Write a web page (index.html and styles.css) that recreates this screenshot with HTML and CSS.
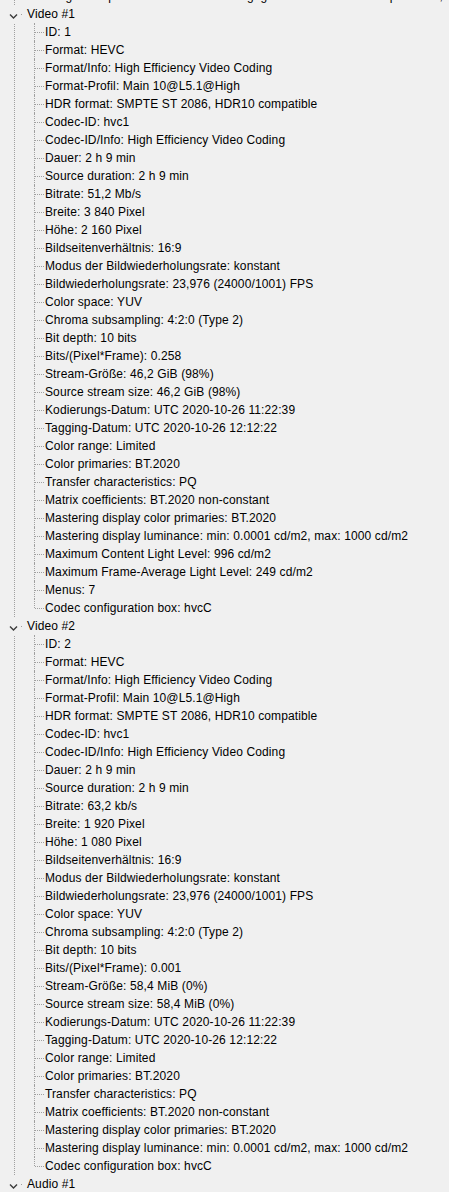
FILE: index.html
```html
<!DOCTYPE html>
<html lang="de">
  <head>
    <meta charset="UTF-8" />
    <meta name="viewport" content="width=device-width, initial-scale=1.0" />
    <title>MediaInfo - Baumansicht</title>
    <link rel="stylesheet" href="styles.css">
  </head>
  <body>
    <ul class="tree">
      <li class="group">
        <ul class="children">
          <li class="leaf last">Long description: Die letzte Schlacht gegen die Maschinen kämpfen Neo, T</li>
        </ul>
      </li>
      <li class="group">
        <div class="row">
          <svg class="chevron" width="20" height="18" viewBox="0 0 20 18"><polyline points="10,9.5 13.5,13 17,9.5" /></svg>
          <span class="dot"></span>
          <span class="label">Video #1</span>
        </div>
        <ul class="children">
          <li class="leaf">ID: 1</li>
          <li class="leaf">Format: HEVC</li>
          <li class="leaf">Format/Info: High Efficiency Video Coding</li>
          <li class="leaf">Format-Profil: Main 10@L5.1@High</li>
          <li class="leaf">HDR format: SMPTE ST 2086, HDR10 compatible</li>
          <li class="leaf">Codec-ID: hvc1</li>
          <li class="leaf">Codec-ID/Info: High Efficiency Video Coding</li>
          <li class="leaf">Dauer: 2 h 9 min</li>
          <li class="leaf">Source duration: 2 h 9 min</li>
          <li class="leaf">Bitrate: 51,2 Mb/s</li>
          <li class="leaf">Breite: 3 840 Pixel</li>
          <li class="leaf">Höhe: 2 160 Pixel</li>
          <li class="leaf">Bildseitenverhältnis: 16:9</li>
          <li class="leaf">Modus der Bildwiederholungsrate: konstant</li>
          <li class="leaf">Bildwiederholungsrate: 23,976 (24000/1001) FPS</li>
          <li class="leaf">Color space: YUV</li>
          <li class="leaf">Chroma subsampling: 4:2:0 (Type 2)</li>
          <li class="leaf">Bit depth: 10 bits</li>
          <li class="leaf">Bits/(Pixel*Frame): 0.258</li>
          <li class="leaf">Stream-Größe: 46,2 GiB (98%)</li>
          <li class="leaf">Source stream size: 46,2 GiB (98%)</li>
          <li class="leaf">Kodierungs-Datum: UTC 2020-10-26 11:22:39</li>
          <li class="leaf">Tagging-Datum: UTC 2020-10-26 12:12:22</li>
          <li class="leaf">Color range: Limited</li>
          <li class="leaf">Color primaries: BT.2020</li>
          <li class="leaf">Transfer characteristics: PQ</li>
          <li class="leaf">Matrix coefficients: BT.2020 non-constant</li>
          <li class="leaf">Mastering display color primaries: BT.2020</li>
          <li class="leaf">Mastering display luminance: min: 0.0001 cd/m2, max: 1000 cd/m2</li>
          <li class="leaf">Maximum Content Light Level: 996 cd/m2</li>
          <li class="leaf">Maximum Frame-Average Light Level: 249 cd/m2</li>
          <li class="leaf">Menus: 7</li>
          <li class="leaf last">Codec configuration box: hvcC</li>
        </ul>
      </li>
      <li class="group">
        <div class="row">
          <svg class="chevron" width="20" height="18" viewBox="0 0 20 18"><polyline points="10,9.5 13.5,13 17,9.5" /></svg>
          <span class="dot"></span>
          <span class="label">Video #2</span>
        </div>
        <ul class="children">
          <li class="leaf">ID: 2</li>
          <li class="leaf">Format: HEVC</li>
          <li class="leaf">Format/Info: High Efficiency Video Coding</li>
          <li class="leaf">Format-Profil: Main 10@L5.1@High</li>
          <li class="leaf">HDR format: SMPTE ST 2086, HDR10 compatible</li>
          <li class="leaf">Codec-ID: hvc1</li>
          <li class="leaf">Codec-ID/Info: High Efficiency Video Coding</li>
          <li class="leaf">Dauer: 2 h 9 min</li>
          <li class="leaf">Source duration: 2 h 9 min</li>
          <li class="leaf">Bitrate: 63,2 kb/s</li>
          <li class="leaf">Breite: 1 920 Pixel</li>
          <li class="leaf">Höhe: 1 080 Pixel</li>
          <li class="leaf">Bildseitenverhältnis: 16:9</li>
          <li class="leaf">Modus der Bildwiederholungsrate: konstant</li>
          <li class="leaf">Bildwiederholungsrate: 23,976 (24000/1001) FPS</li>
          <li class="leaf">Color space: YUV</li>
          <li class="leaf">Chroma subsampling: 4:2:0 (Type 2)</li>
          <li class="leaf">Bit depth: 10 bits</li>
          <li class="leaf">Bits/(Pixel*Frame): 0.001</li>
          <li class="leaf">Stream-Größe: 58,4 MiB (0%)</li>
          <li class="leaf">Source stream size: 58,4 MiB (0%)</li>
          <li class="leaf">Kodierungs-Datum: UTC 2020-10-26 11:22:39</li>
          <li class="leaf">Tagging-Datum: UTC 2020-10-26 12:12:22</li>
          <li class="leaf">Color range: Limited</li>
          <li class="leaf">Color primaries: BT.2020</li>
          <li class="leaf">Transfer characteristics: PQ</li>
          <li class="leaf">Matrix coefficients: BT.2020 non-constant</li>
          <li class="leaf">Mastering display color primaries: BT.2020</li>
          <li class="leaf">Mastering display luminance: min: 0.0001 cd/m2, max: 1000 cd/m2</li>
          <li class="leaf last">Codec configuration box: hvcC</li>
        </ul>
      </li>
      <li class="group">
        <div class="row">
          <svg class="chevron" width="20" height="18" viewBox="0 0 20 18"><polyline points="10,9.5 13.5,13 17,9.5" /></svg>
          <span class="dot"></span>
          <span class="label">Audio #1</span>
        </div>
      </li>
    </ul>
  </body>
</html>
```

FILE: styles.css
```css
html {
  overflow: hidden;
}
body {
  font-family: "Liberation Sans", Arial, sans-serif;
  font-size: 12px;
  letter-spacing: 0.12px;
  color: #000;
  background-color: #f0f0f0;
  margin: 0;
  padding: 0;
  overflow: hidden;
  height: 1192px;
}
.tree {
  list-style: none;
  margin: -13px 0 0 0;
  padding: 0;
  position: relative;
  overflow: hidden;
}
/* root level connector */
.tree::before {
  content: "";
  position: absolute;
  left: 14px;
  top: 0;
  bottom: 0;
  border-left: 1px dotted #a0a0a0;
}
.group {
  margin: 0;
  padding: 0;
}
.row {
  display: flex;
  align-items: center;
  height: 18px;
  position: relative;
}
.chevron {
  flex: none;
  background-color: #f0f0f0;
}
.chevron polyline {
  fill: none;
  stroke: #3c3c3c;
  stroke-width: 1.4;
}
.dot {
  width: 1px;
  height: 1px;
  background-color: #a0a0a0;
  margin: 1px 5px 0 1px;
}
.label {
  white-space: nowrap;
  line-height: 18px;
}
.children {
  list-style: none;
  margin: 0 0 0 34px;
  padding: 0;
}
.leaf {
  height: 18px;
  line-height: 18px;
  padding-left: 11px;
  position: relative;
  white-space: nowrap;
  overflow: hidden;
}
.leaf::before {
  content: "";
  position: absolute;
  left: 0;
  top: 0;
  bottom: 0;
  border-left: 1px dotted #a0a0a0;
}
.leaf.last::before {
  bottom: 9px;
}
.leaf::after {
  content: "";
  position: absolute;
  left: 1px;
  top: 9px;
  width: 9px;
  border-top: 1px dotted #a0a0a0;
}
```
